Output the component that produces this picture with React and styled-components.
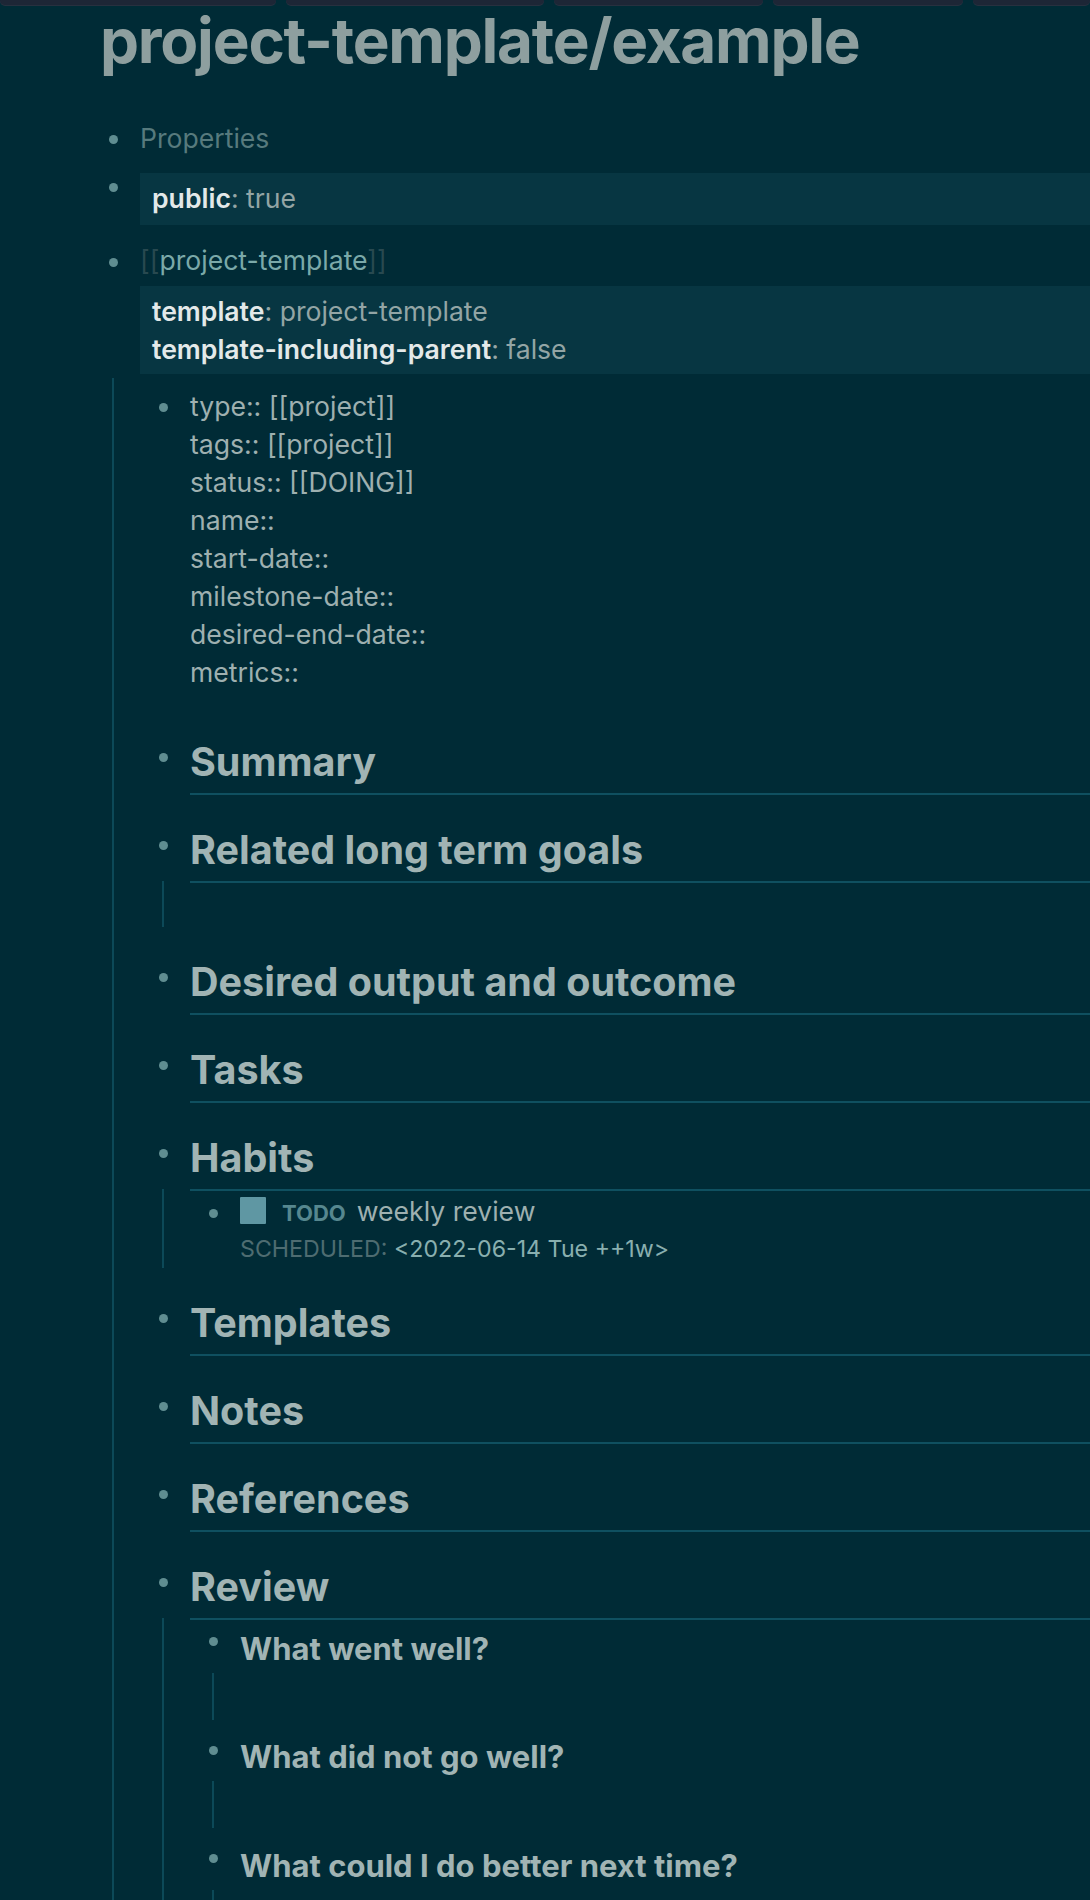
import styled, { createGlobalStyle } from 'styled-components';

const GlobalStyle = createGlobalStyle`
    html,
    body {
        margin: 0;
        padding: 0;
        background: #002b36;
        overflow: hidden;
    }
    body {
        font-family: Inter, 'Noto Sans', sans-serif;
        color: #9eb0b0;
    }
`;

const TabStrip = styled.div`
    display: flex;
    gap: 10px;
    height: 5px;
`;

const Tab = styled.div`
    flex: ${p => (p.$w ? `0 0 ${p.$w}px` : '1')};
    background: #1d2636;
    border-radius: 0 0 7px 7px;
    box-shadow: 0 1px 0 #27303f;
`;

const Main = styled.main`
    padding-left: 100px;
`;

const Title = styled.h1`
    margin: 2px 0 44px;
    font-size: 62px;
    line-height: 68px;
    font-weight: 700;
    letter-spacing: -0.02em;
    color: #8e9f9f;
    white-space: nowrap;
`;

const List = styled.div`
    display: flex;
    flex-direction: column;
    gap: ${p => p.$gap || 0}px;
`;

const Block = styled.div`
    display: flex;
    flex-direction: column;
    margin-top: ${p => p.$mt || 0}px;
    padding-top: ${p => p.$pt || 0}px;
`;

const Row = styled.div`
    display: flex;
    align-items: flex-start;
`;

const BulletWrap = styled.div`
    flex: 0 0 40px;
    box-sizing: border-box;
    padding-top: ${p => p.$at - 4.5}px;
    padding-left: 8.5px;
`;

const Dot = styled.span`
    display: block;
    width: 9px;
    height: 9px;
    border-radius: 50%;
    background: #5f8d91;
`;

const Content = styled.div`
    flex: 1;
    min-width: 0;
`;

const Line = styled.div`
    font-size: 26.6px;
    line-height: 38px;
    color: ${p => p.$color || '#9eb0b0'};
    white-space: nowrap;
`;

const PropBox = styled.div`
    background: #073642;
    padding: 6px 12px 6px;
    margin-top: ${p => p.$mt || 0}px;
    &.single {
        padding-bottom: 8px;
    }
`;

const Key = styled.span`
    font-weight: 600;
    color: #e3e9e9;
`;

const Value = styled.span`
    color: #93a5a5;
`;

const Bracket = styled.span`
    color: #284950;
`;

const PageRef = styled.span`
    color: #7ba9a9;
`;

const Children = styled.div`
    display: flex;
    flex-direction: column;
    margin-left: 12px;
    margin-top: ${p => p.$mt || 0}px;
    border-left: 2px solid #0c4958;
    padding-left: 36px;
    min-height: ${p => p.$h || 0}px;
    box-sizing: border-box;
`;

const Heading = styled.h2`
    margin: 0;
    font-size: 39.5px;
    line-height: 52px;
    font-weight: 700;
    color: #a1b4b4;
    padding-bottom: 5.5px;
    border-bottom: 2px solid #0f5060;
    white-space: nowrap;
`;

const SubHeading = styled.h3`
    margin: 0;
    font-size: 31px;
    line-height: 40px;
    font-weight: 700;
    color: #a1b4b4;
    white-space: nowrap;
`;

const TodoLine = styled.div`
    display: flex;
    align-items: baseline;
    height: 38px;
    line-height: 38px;
    white-space: nowrap;
`;

const Check = styled.span`
    align-self: center;
    width: 26px;
    height: 27px;
    margin-right: 16px;
    border-radius: 1px;
    background: #5f97a3;
`;

const Marker = styled.span`
    font-size: 22px;
    font-weight: 700;
    color: #56878f;
    margin-right: 11px;
`;

const TodoText = styled.span`
    font-size: 26.6px;
    color: #9eb0b0;
`;

const Scheduled = styled.div`
    font-size: 23.2px;
    line-height: 32px;
    padding-top: 3px;
    white-space: nowrap;
    color: #89afaf;
    span {
        color: #4e6c71;
    }
`;

const tabs = [276, 258, 209, 190, 0];

const attributes = [
    'type:: [[project]]',
    'tags:: [[project]]',
    'status:: [[DOING]]',
    'name::',
    'start-date::',
    'milestone-date::',
    'desired-end-date::',
    'metrics::',
];

const questions = ['What went well?', 'What did not go well?', 'What could I do better next time?'];

const sections = [
    { title: 'Summary' },
    { title: 'Related long term goals', empty: true },
    { title: 'Desired output and outcome' },
    { title: 'Tasks' },
    { title: 'Habits', habit: true },
    { title: 'Templates' },
    { title: 'Notes' },
    { title: 'References' },
    { title: 'Review', review: true },
];

const Bullet = ({ at }) => (
    <BulletWrap $at={at}>
        <Dot />
    </BulletWrap>
);

const HabitItem = () => (
    <Block $pt={2.5}>
        <Row>
            <Bullet at={21.5} />
            <Content>
                <TodoLine>
                    <Check />
                    <Marker>TODO</Marker>
                    <TodoText>weekly review</TodoText>
                </TodoLine>
                <Scheduled>
                    <span>SCHEDULED:</span> &lt;2022-06-14 Tue ++1w&gt;
                </Scheduled>
            </Content>
        </Row>
    </Block>
);

const Question = ({ text, first }) => (
    <Block $mt={first ? 10.5 : 17.5}>
        <Row>
            <Bullet at={13} />
            <Content>
                <SubHeading>{text}</SubHeading>
            </Content>
        </Row>
        <Children $mt={4} $h={47} />
    </Block>
);

const Section = ({ section, first }) => (
    <Block $mt={first ? 45 : 28.5}>
        <Row>
            <Bullet at={22} />
            <Content>
                <Heading>{section.title}</Heading>
            </Content>
        </Row>
        {section.empty && <Children $mt={-2} $h={46} />}
        {section.habit && (
            <Children $mt={-2} $h={79}>
                <HabitItem />
            </Children>
        )}
        {section.review && (
            <Children $mt={-2}>
                {questions.map((q, i) => (
                    <Question key={q} text={q} first={i === 0} />
                ))}
            </Children>
        )}
    </Block>
);

const App = () => {
    return (
        <>
            <GlobalStyle />
            <TabStrip>
                {tabs.map((w, i) => (
                    <Tab key={i} $w={w} />
                ))}
            </TabStrip>
            <Main>
                <Title>project-template/example</Title>
                <List $gap={16}>
                    <Block>
                        <Row>
                            <Bullet at={20} />
                            <Content>
                                <Line $color="#577a7d">Properties</Line>
                            </Content>
                        </Row>
                    </Block>
                    <Block>
                        <Row>
                            <Bullet at={14} />
                            <Content>
                                <PropBox className="single">
                                    <Line>
                                        <Key>public</Key>
                                        <Value>: true</Value>
                                    </Line>
                                </PropBox>
                            </Content>
                        </Row>
                    </Block>
                    <Block>
                        <Row>
                            <Bullet at={21} />
                            <Content>
                                <Line>
                                    <Bracket>[[</Bracket>
                                    <PageRef>project-template</PageRef>
                                    <Bracket>]]</Bracket>
                                </Line>
                                <PropBox $mt={7}>
                                    <Line>
                                        <Key>template</Key>
                                        <Value>: project-template</Value>
                                    </Line>
                                    <Line>
                                        <Key>template-including-parent</Key>
                                        <Value>: false</Value>
                                    </Line>
                                </PropBox>
                            </Content>
                        </Row>
                        <Children $mt={4}>
                            <Block $pt={8.5}>
                                <Row>
                                    <Bullet at={20.5} />
                                    <Content>
                                        {attributes.map(a => (
                                            <Line key={a}>{a}</Line>
                                        ))}
                                    </Content>
                                </Row>
                            </Block>
                            {sections.map((s, i) => (
                                <Section key={s.title} section={s} first={i === 0} />
                            ))}
                        </Children>
                    </Block>
                </List>
            </Main>
        </>
    );
};

export default App;
